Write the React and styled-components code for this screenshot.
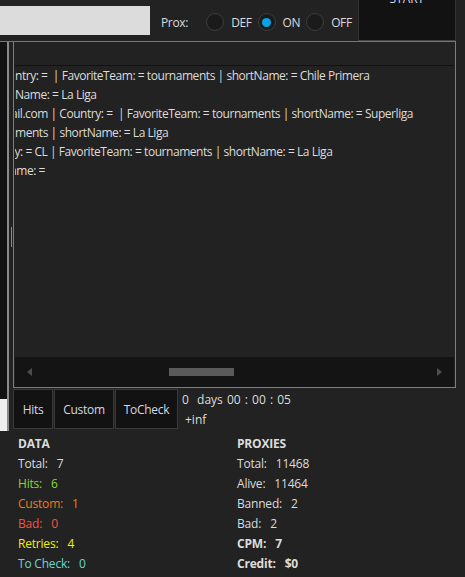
import React from "react"
import styled, { createGlobalStyle } from "styled-components"

const GlobalStyle = createGlobalStyle`
  body {
    margin: 0;
    background: #222222;
    font-family: "Open Sans", "Noto Sans", sans-serif;
    font-size: 12px;
    color: #dcdcdc;
  }
`

const Window = styled.div`
  width: 456px;
  height: 577px;
  overflow: hidden;
  background: #222222;
`

const TopBar = styled.div`
  height: 41px;
  display: flex;
  align-items: center;
`

const SearchInput = styled.div`
  align-self: flex-start;
  margin-top: 6px;
  width: 151px;
  height: 29px;
  background: #dcdcdc;
`

const ProxLabel = styled.span`
  margin-left: 11px;
  margin-top: 3px;
  letter-spacing: -0.3px;
`

const RadioGroup = styled.div`
  display: flex;
  align-items: center;
  margin-left: 18px;
  margin-top: 3px;
`

const RadioItem = styled.label`
  display: flex;
  align-items: center;
  margin-right: 6px;
  letter-spacing: -0.4px;
`

const Circle = styled.span`
  width: 16px;
  height: 16px;
  border-radius: 50%;
  border: 1px solid #3d3d3d;
  background: #1b1b1b;
  display: flex;
  align-items: center;
  justify-content: center;
  margin-right: 7px;

  &::after {
    content: "";
    width: 9px;
    height: 9px;
    border-radius: 50%;
    background: ${(p) => (p.$checked ? "#0aa3e6" : "transparent")};
  }
`

const StartButton = styled.div`
  margin-left: auto;
  align-self: stretch;
  width: 97px;
  background: #121212;
  border-left: 1px solid #333;
  border-right: 1px solid #333;
  border-bottom: 1px solid #444;
  display: flex;
  justify-content: center;
  overflow: hidden;
`

const StartText = styled.span`
  margin-top: -9px;
  line-height: 16px;
  color: #d8dcea;
`

const Middle = styled.div`
  display: flex;
  border-top: 1px solid #767676;
  height: 389px;
`

const LeftStrip = styled.div`
  width: 7px;
  background: #121212;
  display: flex;
  flex-direction: column;
  justify-content: flex-end;
`

const WhiteBlock = styled.div`
  height: 32px;
  background: #eeeeee;
`

const Splitter = styled.div`
  width: 4px;
  border-left: 2px solid #8a8a8a;
  display: flex;
  align-items: center;
  justify-content: center;
`

const Grip = styled.div`
  width: 1px;
  height: 20px;
  background: #8a8a8a;
`

const RightColumn = styled.div`
  flex: 1;
  display: flex;
  flex-direction: column;
`

const LogPanel = styled.div`
  height: 346px;
  border: 1px solid #7d7d7d;
  border-top: none;
  padding: 0 1px;
  display: flex;
  flex-direction: column;
`

const PanelHeader = styled.div`
  height: 23px;
  border-bottom: 1px solid #111;
`

const LogList = styled.div`
  flex: 1;
  overflow: hidden;
  white-space: pre;
`

const Line = styled.div`
  line-height: 19px;
  height: 19px;
  margin-left: ${(p) => -(p.$shift || 0)}px;
  letter-spacing: -0.45px;
`

const HScroll = styled.div`
  height: 30px;
  background: #141414;
  display: flex;
  align-items: center;
  padding: 0 12px;
`

const Arrow = styled.span`
  width: 0;
  height: 0;
  border-top: 4.5px solid transparent;
  border-bottom: 4.5px solid transparent;
  ${(p) =>
    p.$dir === "left"
      ? "border-right: 5px solid #4d4d4d;"
      : "border-left: 5px solid #4d4d4d; margin-left: auto;"}
`

const Thumb = styled.span`
  width: 65px;
  height: 8px;
  background: #5a5a5a;
  margin-left: 137px;
`

const BottomBar = styled.div`
  height: 42px;
  display: flex;
  padding-top: 1px;
`

const TabButton = styled.div`
  width: ${(p) => p.$w}px;
  height: 38px;
  margin-right: 1px;
  background: #121212;
  border: 1px solid #3a3a3a;
  display: flex;
  align-items: center;
  justify-content: center;
  letter-spacing: -0.3px;
  color: #d4d8e2;
`

const Timer = styled.div`
  margin-left: 3px;
  line-height: 20px;
  margin-top: 1px;
`

const TimerRow = styled.div`
  padding-left: ${(p) => p.$indent || 0}px;
  word-spacing: 1px;
`

const Stats = styled.div`
  display: flex;
  padding: 3px 0 0 18px;
`

const StatColumn = styled.div`
  width: 224px;
`

const StatTitle = styled.div`
  line-height: 20px;
  font-weight: 700;
  letter-spacing: -0.2px;
`

const StatRow = styled.div`
  line-height: 20px;
  color: ${(p) => p.$color || "#dcdcdc"};
  font-weight: ${(p) => (p.$bold ? 700 : 400)};
  letter-spacing: -0.2px;
`

const StatValue = styled.span`
  margin-left: 9px;
  color: ${(p) => p.$color || "inherit"};
`

const radios = [
  { label: "DEF", checked: false },
  { label: "ON", checked: true },
  { label: "OFF", checked: false },
]

const lines = [
  { text: "ntry: =  | FavoriteTeam: = tournaments | shortName: = Chile Primera" },
  { text: "Name: = La Liga" },
  { text: "ail.com | Country: =  | FavoriteTeam: = tournaments | shortName: = Superliga", shift: 4 },
  { text: "ments | shortName: = La Liga" },
  { text: "ry: = CL | FavoriteTeam: = tournaments | shortName: = La Liga", shift: 5 },
  { text: "ame: =", shift: 5 },
]

const dataStats = [
  { label: "Total:", value: "7" },
  { label: "Hits:", value: "6", color: "#86d934" },
  { label: "Custom:", value: "1", color: "#f07a1c", valueColor: "#d88a1c" },
  { label: "Bad:", value: "0", color: "#f4533f" },
  { label: "Retries:", value: "4", color: "#f0f00a" },
  { label: "To Check:", value: "0", color: "#66d9cc" },
]

const proxyStats = [
  { label: "Total:", value: "11468" },
  { label: "Alive:", value: "11464" },
  { label: "Banned:", value: "2" },
  { label: "Bad:", value: "2" },
  { label: "CPM:", value: "7", bold: true },
  { label: "Credit:", value: "$0", bold: true },
]

const App = () => {
  return (
    <Window>
      <GlobalStyle />
      <TopBar>
        <SearchInput />
        <ProxLabel>Prox:</ProxLabel>
        <RadioGroup>
          {radios.map((r) => (
            <RadioItem key={r.label}>
              <Circle $checked={r.checked} />
              {r.label}
            </RadioItem>
          ))}
        </RadioGroup>
        <StartButton>
          <StartText>START</StartText>
        </StartButton>
      </TopBar>

      <Middle>
        <LeftStrip>
          <WhiteBlock />
        </LeftStrip>
        <Splitter>
          <Grip />
        </Splitter>
        <RightColumn>
          <LogPanel>
            <PanelHeader />
            <LogList>
              {lines.map((l, i) => (
                <Line key={i} $shift={l.shift}>
                  {l.text}
                </Line>
              ))}
            </LogList>
            <HScroll>
              <Arrow $dir="left" />
              <Thumb />
              <Arrow $dir="right" />
            </HScroll>
          </LogPanel>
          <BottomBar>
            <TabButton $w={38}>Hits</TabButton>
            <TabButton $w={58}>Custom</TabButton>
            <TabButton $w={61}>ToCheck</TabButton>
            <Timer>
              <TimerRow>0&nbsp; days 00 : 00 : 05</TimerRow>
              <TimerRow $indent={3}>+inf</TimerRow>
            </Timer>
          </BottomBar>
        </RightColumn>
      </Middle>

      <Stats>
        <StatColumn>
          <StatTitle>DATA</StatTitle>
          {dataStats.map((s) => (
            <StatRow key={s.label} $color={s.color}>
              {s.label}
              <StatValue $color={s.valueColor}>{s.value}</StatValue>
            </StatRow>
          ))}
        </StatColumn>
        <StatColumn>
          <StatTitle>PROXIES</StatTitle>
          {proxyStats.map((s) => (
            <StatRow key={s.label} $bold={s.bold}>
              {s.label}
              <StatValue>{s.value}</StatValue>
            </StatRow>
          ))}
        </StatColumn>
      </Stats>
    </Window>
  )
}

export default App
